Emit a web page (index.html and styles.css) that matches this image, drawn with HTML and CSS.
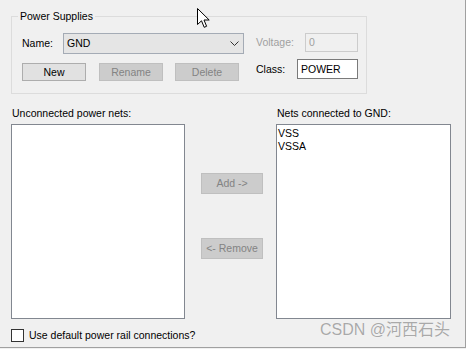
FILE: index.html
```html
<!DOCTYPE html>
<html>
	<head>
		<meta charset="UTF-8">
		<title>Power Supplies</title>
		<link rel="stylesheet" href="styles.css">
	</head>
	<body>
		<div class="dialog">
			<div class="group">
				<span class="group-title">Power Supplies</span>
				<div class="row">
					<span class="lbl">Name:</span>
					<div class="combo">
						<span>GND</span>
						<svg class="chev" width="9" height="5" viewBox="0 0 9 5"><polyline points="0.5,0.5 4.5,4.5 8.5,0.5" fill="none" stroke="#333" stroke-width="1"/></svg>
					</div>
					<span class="lbl volt-lbl">Voltage:</span>
					<div class="field volt">0</div>
				</div>
				<div class="row row2">
					<button class="btn">New</button>
					<button class="btn off rename">Rename</button>
					<button class="btn off delete">Delete</button>
					<span class="lbl class-lbl">Class:</span>
					<div class="field cls">POWER</div>
				</div>
			</div>

			<div class="nets">
				<div class="col left-col">
					<div class="cap">Unconnected power nets:</div>
					<div class="list"></div>
				</div>
				<div class="mid">
					<button class="btn off wide">Add -&gt;</button>
					<button class="btn off wide remove">&lt;- Remove</button>
				</div>
				<div class="col right-col">
					<div class="cap">Nets connected to GND:</div>
					<div class="list">
						<div>VSS</div>
						<div>VSSA</div>
					</div>
				</div>
			</div>

			<div class="check-row">
				<span class="box"></span>
				<span>Use default power rail connections?</span>
			</div>

			<div class="watermark">CSDN @河西石头</div>

			<!-- mouse pointer -->
			<svg class="cursor" width="14" height="21" viewBox="0 0 14 21">
				<path d="M0.5 0.5 L0.5 16.5 L4.5 12.8 L7.2 19.3 L9.6 18.3 L7 12 L12.2 12 Z" fill="#fff" stroke="#000" stroke-width="1" stroke-linejoin="miter"/>
			</svg>
		</div>
	</body>
</html>
```

FILE: styles.css
```css
* {
	margin: 0;
	padding: 0;
	box-sizing: border-box;
}

html,
body {
	background: #f0f0f0;
}

body {
	font: 10.5px/13px "Liberation Sans", Arial, sans-serif;
	color: #000;
}

.dialog {
	position: relative;
	width: 466px;
	height: 348px;
	padding: 16px 0 0 11px;
	border-right: 1px solid #a0a0a0;
	border-bottom: 1px solid #a0a0a0;
	overflow: hidden;
}

/* group box */
.group {
	position: relative;
	width: 356px;
	height: 78px;
	border: 1px solid #dcdcdc;
	padding: 16px 0 0 10px;
}

.group-title {
	position: absolute;
	top: -7px;
	left: 6px;
	padding: 0 2px;
	background: #f0f0f0;
}

.row {
	display: flex;
	align-items: flex-start;
	height: 21px;
}

.row2 {
	margin-top: 5px;
	height: 20px;
}

.lbl {
	width: 41px;
	line-height: 21px;
}

.combo {
	display: flex;
	align-items: center;
	justify-content: space-between;
	width: 181px;
	height: 21px;
	padding: 0 4px 0 3px;
	border: 1px solid #a4abb5;
	background: #e5e5e5;
}

.chev {
	display: block;
}

.volt-lbl {
	width: 49px;
	margin-left: 12px;
	line-height: 19px;
	color: #a0a0a0;
}

.field {
	height: 19px;
	padding-left: 3px;
	line-height: 17px;
}

.volt {
	width: 53px;
	border: 1px solid #cccccc;
	color: #a0a0a0;
}

.class-lbl {
	margin-left: 17px;
	line-height: 20px;
}

.cls {
	width: 61px;
	height: 20px;
	line-height: 18px;
	border: 1px solid #7a7a7a;
	background: #fff;
}

/* buttons */
.btn {
	width: 64px;
	height: 18px;
	margin-top: 4px;
	border: 1px solid #adadad;
	background: #e1e1e1;
	font: inherit;
	color: #000;
}

.btn.off {
	background: #cccccc;
	border-color: #bfbfbf;
	color: #838383;
}

.rename {
	margin-left: 13px;
}

.delete {
	margin-left: 12px;
}

/* net lists */
.nets {
	display: flex;
	margin-top: 13px;
}

.cap {
	height: 13px;
	margin-bottom: 4px;
	padding-left: 1px;
}

.left-col {
	width: 174px;
}

.right-col {
	width: 175px;
	margin-left: 13px;
}

.list {
	height: 195px;
	padding: 2px 1px;
	border: 1px solid #828790;
	background: #fff;
}

.mid {
	display: flex;
	flex-direction: column;
	width: 62px;
	margin-left: 16px;
	padding-top: 66px;
}

.btn.wide {
	width: 62px;
	height: 21px;
	margin-top: 0;
}

.btn.remove {
	margin-top: 44px;
}

/* checkbox */
.check-row {
	display: flex;
	align-items: center;
	height: 13px;
	margin-top: 10px;
}

.box {
	width: 13px;
	height: 13px;
	margin-right: 5px;
	border: 1px solid #333;
	background: #fff;
}

.watermark {
	position: absolute;
	right: 15px;
	bottom: 8px;
	font: 16px/18px "Liberation Sans", "Noto Sans CJK SC", sans-serif;
	color: #a9a9a9;
	text-shadow: 0 0 1px #fff;
}

.cursor {
	position: absolute;
	left: 197px;
	top: 8px;
}
```
